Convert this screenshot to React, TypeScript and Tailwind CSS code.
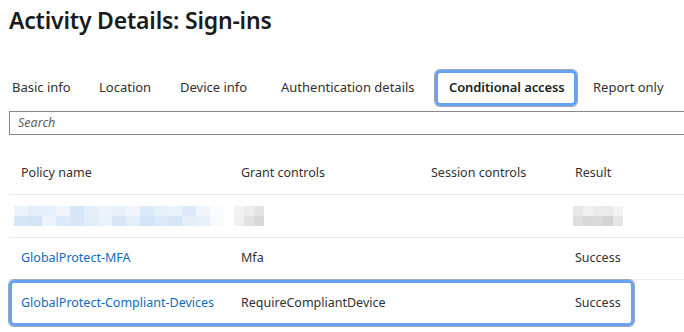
import React from "react";

const font = { fontFamily: '"Noto Sans", "Open Sans", sans-serif' };

const blurPolicy = [
  ["#eef4fb", "#e3eef9", "#e6f0fa", "#f0f5fb", "#d7e7f7", "#e3eef9", "#eef4fb", "#e8f0f9", "#f2f6fc", "#dbe9f8", "#e6f0fa", "#eaf2fb", "#dfeaf8", "#f0f5fb", "#fafcfe"],
  ["#d6e6f6", "#d2e4f6", "#eef4fb", "#dce9f7", "#d8e7f7", "#e0ecf8", "#eaf2fb", "#d8e7f7", "#e3eef9", "#d2e4f6", "#dbe9f8", "#d6e6f6", "#e3eef9", "#e8f0f9", "#f7fafd"],
];
const blurGrant = [
  ["#f2f2f2", "#ececec", "#e4e4e4"],
  ["#f0f0f0", "#e2e2e2", "#d9d9d9"],
];
const blurResult = [
  ["#e8e8e8", "#f0f0f0", "#ebebeb", "#eaeaea", "#f2f2f2"],
  ["#e0dfe0", "#d8d8d8", "#dbdadb", "#d4d4d4", "#e6e6e6"],
];

function Blur({ grid, cell = 10 }: { grid: string[][]; cell?: number }) {
  return (
    <div className="flex flex-col">
      {grid.map((row, i) => (
        <div key={i} className="flex">
          {row.map((c, j) => (
            <div key={j} style={{ width: cell, height: 10, background: c }} />
          ))}
        </div>
      ))}
    </div>
  );
}

export default function App() {
  return (
    <div className="w-[684px] h-[332px] bg-white overflow-hidden relative" style={font}>
      <h1 className="pl-[9px] pt-[2px] text-[23px] leading-[36px] font-semibold text-[#1b1b1b] tracking-[-0.2px]">
        Activity Details: Sign-ins
      </h1>

      <div className="mt-[32px] flex items-center h-[36px] text-[13px] text-[#323130]">
        <div className="w-[87px] pl-[12px]">Basic info</div>
        <div className="w-[81px] pl-[12px]">Location</div>
        <div className="w-[101px] pl-[12px]">Device info</div>
        <div className="w-[166px] pl-[12px] whitespace-nowrap">Authentication details</div>
        <div className="w-[142px] h-[36px] flex items-center pl-[11px] border-[3px] border-[#67a2f3] rounded-[5px] font-semibold text-[#201f1e] shadow-[0_0_0_1px_#9aa7b8] whitespace-nowrap tracking-[-0.1px]">
          Conditional access
        </div>
        <div className="pl-[16px] whitespace-nowrap">Report only</div>
      </div>

      <div className="ml-[9px] mt-[5px] h-[24px] w-[700px] border border-[#8a8886] flex items-center pl-[8px]">
        <span className="italic text-[12.5px] text-[#605e5c]">Search</span>
      </div>

      <div className="ml-[9px] mt-[17px] text-[12.5px] text-[#323130]">
        <div className="flex items-center h-[43px] border-b border-[#ececec]">
          <div className="w-[220px] pl-[12px]">Policy name</div>
          <div className="w-[190px] pl-[12px]">Grant controls</div>
          <div className="w-[144px] pl-[12px]">Session controls</div>
          <div className="pl-[12px]">Result</div>
        </div>
        <div className="flex items-center h-[43px] border-b border-[#ececec]">
          <div className="w-[225px] pl-[5px]">
            <Blur grid={blurPolicy} cell={14} />
          </div>
          <div className="w-[185px]">
            <Blur grid={blurGrant} />
          </div>
          <div className="w-[144px]" />
          <div className="pl-[10px]">
            <Blur grid={blurResult} />
          </div>
        </div>
        <div className="flex items-center h-[42px] border-b border-[#ececec]">
          <div className="w-[220px] pl-[12px] text-[#0f6cbd]">GlobalProtect-MFA</div>
          <div className="w-[190px] pl-[12px]">Mfa</div>
          <div className="w-[144px] pl-[12px]" />
          <div className="pl-[12px]">Success</div>
        </div>
        <div className="relative flex items-center h-[46px]">
          <div className="w-[220px] pl-[12px] text-[#0f6cbd] whitespace-nowrap">GlobalProtect-Compliant-Devices</div>
          <div className="w-[190px] pl-[12px]">RequireCompliantDevice</div>
          <div className="w-[144px] pl-[12px]" />
          <div className="pl-[12px]">Success</div>
          <div className="absolute left-0 top-0 w-[625px] h-[46px] border-[3px] border-[#67a2f3] rounded-[5px] shadow-[0_0_0_1px_#9aa7b8]" />
        </div>
      </div>
    </div>
  );
}
